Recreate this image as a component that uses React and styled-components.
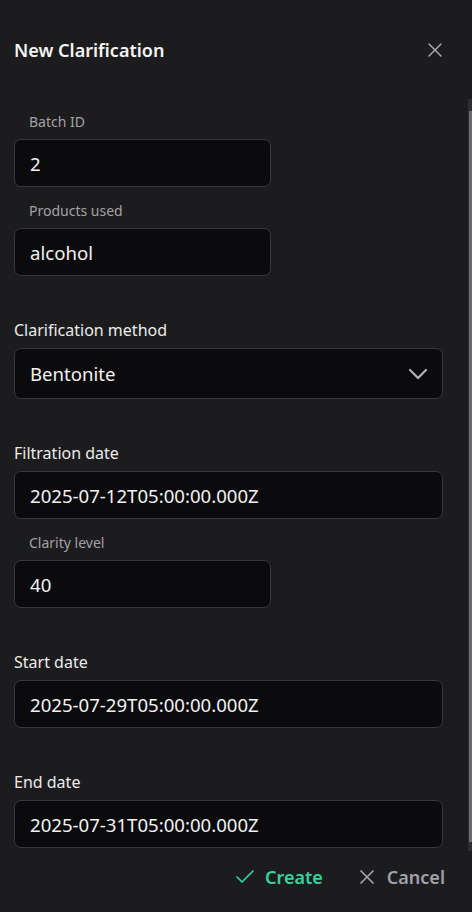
import styled, { createGlobalStyle } from 'styled-components';
import { X, Check, ChevronDown } from 'lucide-react';

const GlobalStyle = createGlobalStyle`
  html, body {
    margin: 0;
    padding: 0;
    background: #1c1c1e;
    overflow: hidden;
  }
  * {
    box-sizing: border-box;
  }
`;

const Dialog = styled.div`
  width: 472px;
  height: 912px;
  display: flex;
  flex-direction: column;
  background-color: #1c1c1e;
  font-family: 'Noto Sans', 'Open Sans', sans-serif;
  color: #f2f2f2;
`;

const Header = styled.div`
  height: 99px;
  display: flex;
  flex-direction: row;
  justify-content: space-between;
  align-items: flex-start;
  padding: 37px 25px 0 14px;
`;

const Title = styled.h2`
  margin: 0;
  font-size: 18px;
  line-height: 26px;
  font-weight: 600;
  color: #f4f4f4;
`;

const CloseButton = styled.button`
  border: none;
  background: none;
  padding: 0;
  margin-top: 1px;
  color: #a8a8ac;
  display: flex;
  cursor: pointer;
`;

const BodyFrame = styled.div`
  position: relative;
  height: 752px;
`;

const Body = styled.div`
  height: 100%;
  overflow-y: auto;
  padding: 13px 29px 0 14px;
  scrollbar-width: none;
`;

const ScrollRail = styled.div`
  position: absolute;
  top: 0;
  right: 0;
  width: 4px;
  height: 100%;
  background: #2d2d2f;
  padding: 12px 0 9px 1px;
`;

const ScrollThumb = styled.div`
  width: 3px;
  height: 100%;
  background: #6a6a6e;
`;

const Field = styled.div`
  display: flex;
  flex-direction: column;
  margin-top: ${(p) => p.$gap}px;
`;

const SmallLabel = styled.label`
  font-size: 14px;
  line-height: 20px;
  color: #a2a2a6;
  padding-left: 15px;
  margin-bottom: 7px;
`;

const Label = styled.label`
  font-size: 16px;
  line-height: 22px;
  color: #ebebeb;
  margin-bottom: 7px;
`;

const Input = styled.input`
  width: ${(p) => (p.$short ? '257px' : '100%')};
  height: 48px;
  background-color: #0b0b0d;
  border: 1px solid #38383b;
  border-radius: 7px;
  padding: 0 15px;
  font-family: inherit;
  font-size: 18.6px;
  color: #f2f2f2;
  outline: none;
`;

const Select = styled.div`
  width: 100%;
  height: 51px;
  display: flex;
  flex-direction: row;
  justify-content: space-between;
  align-items: center;
  background-color: #0b0b0d;
  border: 1px solid #38383b;
  border-radius: 7px;
  padding: 0 8px 0 15px;
  font-size: 18.6px;
  color: #f2f2f2;
  svg {
    color: #b4b4b8;
  }
`;

const Footer = styled.div`
  flex: 1;
  display: flex;
  flex-direction: row;
  justify-content: flex-end;
  align-items: flex-start;
  gap: 32px;
  padding: 8px 27px 0 0;
`;

const Action = styled.button`
  display: flex;
  flex-direction: row;
  align-items: center;
  gap: 8px;
  border: none;
  background: none;
  padding: 0;
  height: 36px;
  font-family: inherit;
  font-size: 18px;
  font-weight: 600;
  color: ${(p) => (p.$primary ? '#34d399' : '#a1a1aa')};
  cursor: pointer;
`;

function App() {
  return (
    <Dialog>
      <GlobalStyle />
      <Header>
        <Title>New Clarification</Title>
        <CloseButton>
          <X size={24} strokeWidth={1.5} />
        </CloseButton>
      </Header>
      <BodyFrame>
        <Body>
          <Field $gap={0}>
            <SmallLabel>Batch ID</SmallLabel>
            <Input $short defaultValue='2' />
          </Field>
          <Field $gap={14}>
            <SmallLabel>Products used</SmallLabel>
            <Input $short defaultValue='alcohol' />
          </Field>
          <Field $gap={43}>
            <Label>Clarification method</Label>
            <Select>
              <span>Bentonite</span>
              <ChevronDown size={32} strokeWidth={1.6} />
            </Select>
          </Field>
          <Field $gap={43}>
            <Label>Filtration date</Label>
            <Input defaultValue='2025-07-12T05:00:00.000Z' />
          </Field>
          <Field $gap={14}>
            <SmallLabel>Clarity level</SmallLabel>
            <Input $short defaultValue='40' />
          </Field>
          <Field $gap={43}>
            <Label>Start date</Label>
            <Input defaultValue='2025-07-29T05:00:00.000Z' />
          </Field>
          <Field $gap={43}>
            <Label>End date</Label>
            <Input defaultValue='2025-07-31T05:00:00.000Z' />
          </Field>
        </Body>
        <ScrollRail>
          <ScrollThumb />
        </ScrollRail>
      </BodyFrame>
      <Footer>
        <Action $primary>
          <Check size={24} strokeWidth={1.7} />
          Create
        </Action>
        <Action>
          <X size={24} strokeWidth={1.7} />
          Cancel
        </Action>
      </Footer>
    </Dialog>
  );
}

export default App;
